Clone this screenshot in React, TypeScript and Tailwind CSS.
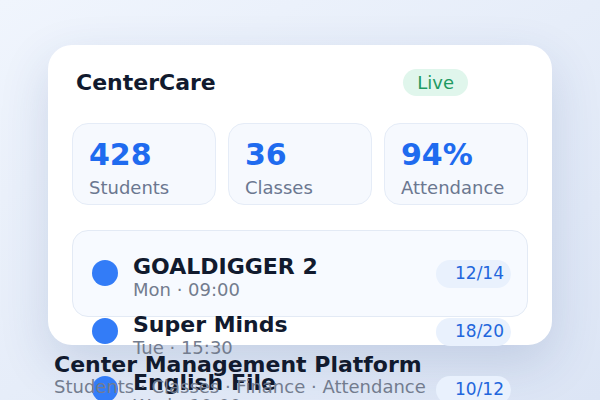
const stats = [
  { value: "428", label: "Students" },
  { value: "36", label: "Classes" },
  { value: "94%", label: "Attendance" },
];

const classes = [
  { name: "GOALDIGGER 2", time: "Mon · 09:00", seats: "12/14" },
  { name: "Super Minds", time: "Tue · 15:30", seats: "18/20" },
  { name: "English File", time: "Wed · 10:00", seats: "10/12" },
];

export default function App() {
  return (
    <div className="h-[400px] w-[600px] overflow-hidden bg-linear-to-br from-[#f0f5fd] to-[#dce5f5] px-12 pt-[45px] font-['DejaVu_Sans',sans-serif]">
      <div className="flex h-[300px] flex-col rounded-3xl bg-white p-6 shadow-[0_18px_50px_rgba(40,70,130,0.16)]">
        <div className="flex h-[30px] items-start">
          <h1 className="pl-1 text-[22px] font-bold leading-[27px] text-[#111a2e]">
            CenterCare
          </h1>
          <span className="ml-auto mr-[60px] flex h-[27px] items-center rounded-full bg-[#e0f6ec] px-[14px] text-[18px] text-[#1f9a62]">
            Live
          </span>
        </div>

        <div className="mt-6 flex gap-3">
          {stats.map((s) => (
            <div
              key={s.label}
              className="h-[82px] flex-1 rounded-2xl border border-[#e5ecf7] bg-[#f6f9fe] px-4 pt-4"
            >
              <div className="text-[30px] font-bold leading-none text-[#1f6bef]">
                {s.value}
              </div>
              <div className="mt-2 text-[18px] leading-5 text-[#6b7790]">
                {s.label}
              </div>
            </div>
          ))}
        </div>

        {/* fixed-height list: rows spill past the card */}
        <div className="mt-[25px] h-[87px] rounded-2xl border border-[#e3eaf5] bg-[#f7faff] p-4">
          <div className="flex flex-col gap-[6px]">
            {classes.map((c) => (
              <div key={c.name} className="flex h-[52px] items-start gap-3">
                <div className="mt-[13px] flex w-8 justify-center">
                  <div className="h-[26px] w-[26px] rounded-full bg-[#337cf7]" />
                </div>
                <div className="mt-[7px] flex-1">
                  <div className="text-[22px] font-bold leading-[26px] text-[#111a2e]">
                    {c.name}
                  </div>
                  <div className="text-[18px] leading-5 text-[#737c8e]">
                    {c.time}
                  </div>
                </div>
                <span className="mt-[13px] flex h-[28px] w-[75px] items-center justify-end rounded-full bg-[#e9f1fd] pr-[7px] text-[17px] text-[#2266dc]">
                  {c.seats}
                </span>
              </div>
            ))}
          </div>
        </div>
      </div>

      <div className="mt-2 px-1.5">
        <h2 className="text-[22px] font-bold leading-6 text-[#111a2e]">
          Center Management Platform
        </h2>
        <p className="text-[18px] leading-5 text-[#737c8e]">
          Students · Classes · Finance · Attendance
        </p>
      </div>
    </div>
  );
}
